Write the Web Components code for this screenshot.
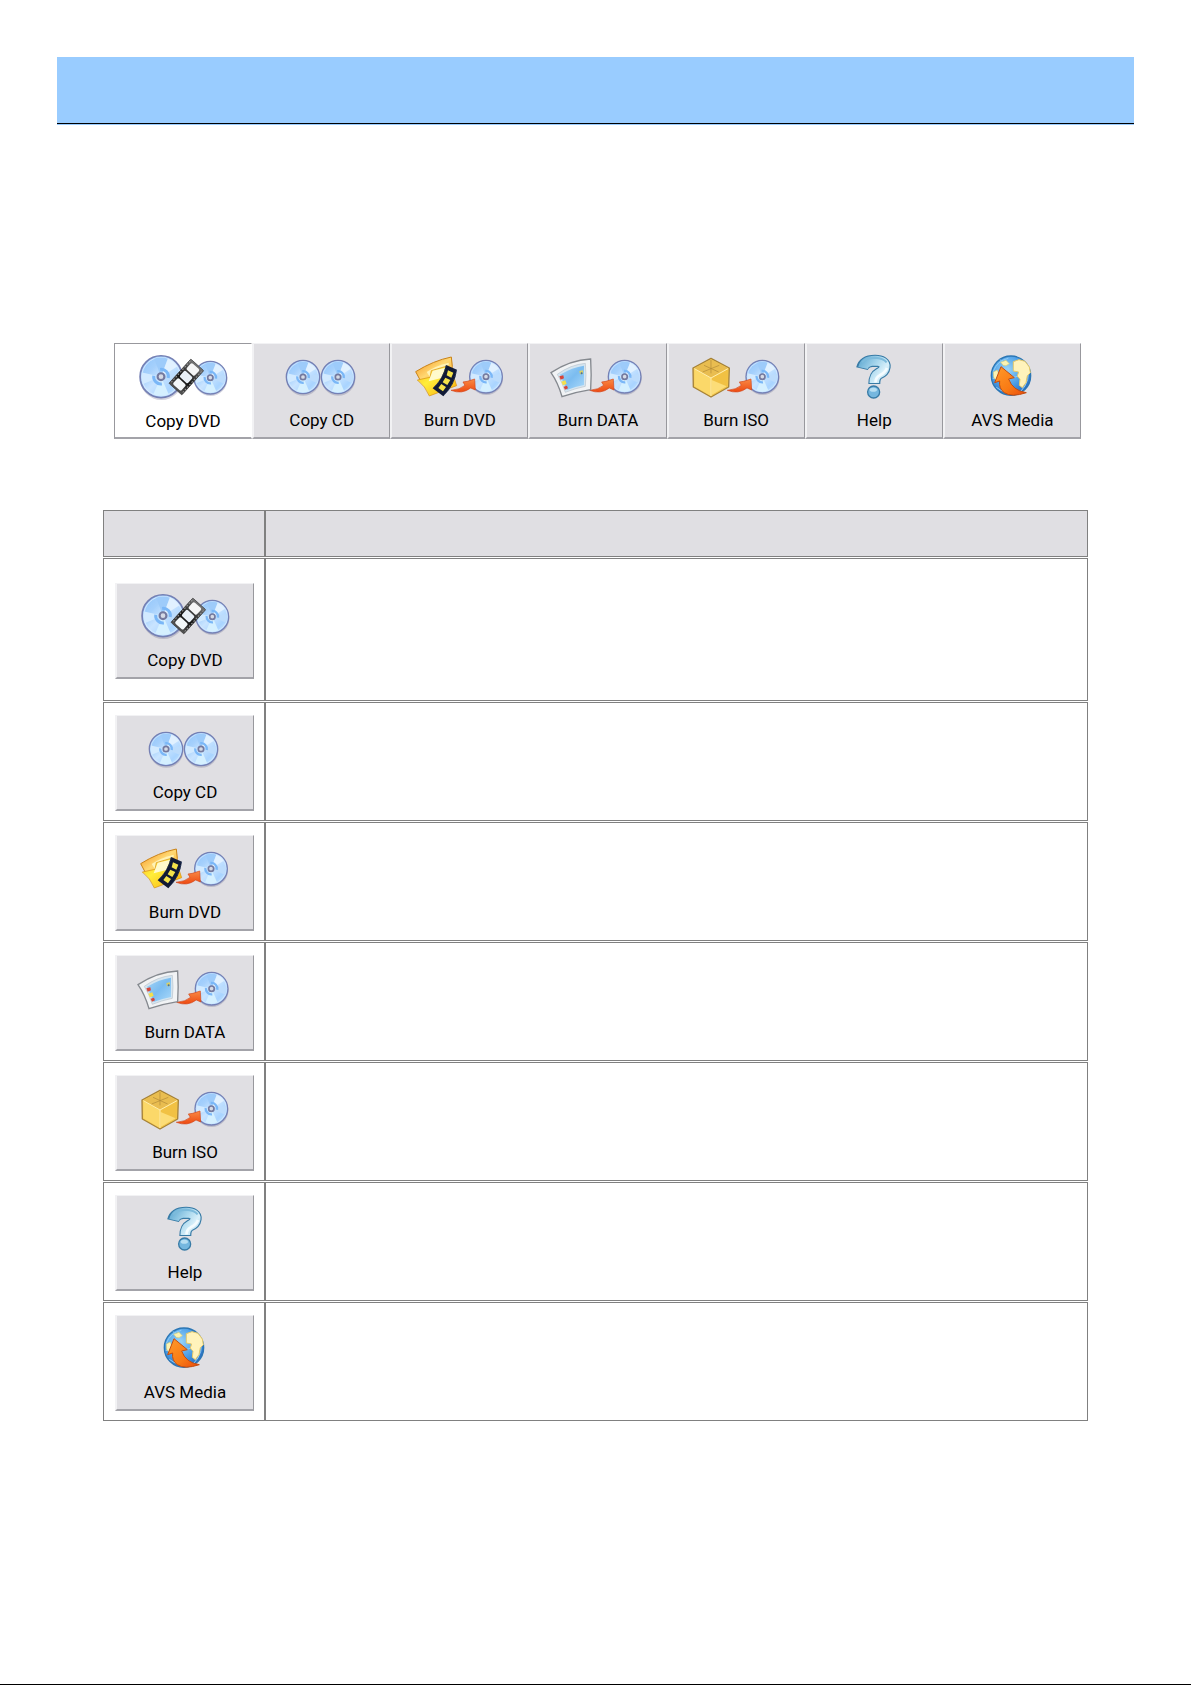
<!DOCTYPE html>
<html lang="en">
<head>
<meta charset="utf-8">
<title>Main Toolbar</title>
<style>
  body { margin: 0; background: #fff; font-family: Roboto, "Liberation Sans", sans-serif; }
</style>
</head>
<body>
<help-page>
  <tool-bar>
    <tool-button icon="copy-dvd" active>Copy DVD</tool-button>
    <tool-button icon="copy-cd">Copy CD</tool-button>
    <tool-button icon="burn-dvd">Burn DVD</tool-button>
    <tool-button icon="burn-data">Burn DATA</tool-button>
    <tool-button icon="burn-iso">Burn ISO</tool-button>
    <tool-button icon="help">Help</tool-button>
    <tool-button icon="avs-media">AVS Media</tool-button>
  </tool-bar>
  <button-table></button-table>
</help-page>

<script>
const DEFS = `
  <defs>
    <linearGradient id="disc" x1="0" y1="0" x2="1" y2="1">
      <stop offset="0" stop-color="#8fc4fb"/><stop offset=".3" stop-color="#a5d0fc"/>
      <stop offset=".5" stop-color="#c9e4ff"/><stop offset=".75" stop-color="#a9d4ff"/><stop offset="1" stop-color="#d8f0ff"/>
    </linearGradient>
    <linearGradient id="arrow" x1="0" y1="0" x2="0" y2="1">
      <stop offset="0" stop-color="#f98a45"/><stop offset="1" stop-color="#ee4a12"/>
    </linearGradient>
    <linearGradient id="gold" x1="0" y1="0" x2="1" y2="1">
      <stop offset="0" stop-color="#f58a10"/><stop offset=".5" stop-color="#ffd873"/><stop offset="1" stop-color="#fba81a"/>
    </linearGradient>
    <linearGradient id="yellow" x1="0" y1="0" x2="1" y2="1">
      <stop offset="0" stop-color="#ffb81c"/><stop offset=".4" stop-color="#ffee3a"/><stop offset="1" stop-color="#f9a90c"/>
    </linearGradient>
    <linearGradient id="photo" x1="0" y1="0" x2="1" y2="1">
      <stop offset="0" stop-color="#a5d6f8"/><stop offset=".5" stop-color="#7bbcf0"/><stop offset="1" stop-color="#a9d9fa"/>
    </linearGradient>
    <linearGradient id="film" x1="0" y1="0" x2="1" y2="0">
      <stop offset="0" stop-color="#555"/><stop offset=".4" stop-color="#111"/><stop offset="1" stop-color="#777"/>
    </linearGradient>
    <linearGradient id="mark" gradientUnits="userSpaceOnUse" x1="595" y1="85" x2="685" y2="150">
      <stop offset="0" stop-color="#5aa5cf"/><stop offset=".45" stop-color="#a5d5ec"/><stop offset=".75" stop-color="#d8f0fa"/><stop offset="1" stop-color="#a8d4ea"/>
    </linearGradient>
    <radialGradient id="globe" cx=".4" cy=".35" r=".65">
      <stop offset="0" stop-color="#9bd6fb"/><stop offset=".6" stop-color="#4d9fe6"/><stop offset="1" stop-color="#2d72c4"/>
    </radialGradient>
    <linearGradient id="fire" x1="0" y1="0" x2="1" y2="1">
      <stop offset="0" stop-color="#ff9a2a"/><stop offset=".6" stop-color="#f97a14"/><stop offset="1" stop-color="#e8480c"/>
    </linearGradient>
  </defs>`;

// a compact disc with its light sectors and hub
const disc = (x, y, r) => `
  <g transform="translate(${x} ${y}) scale(${r / 50})">
    <circle cx="1" cy="5" r="50" fill="#55557a" opacity=".25"/>
    <circle r="49" fill="url(#disc)" stroke="#7580b4" stroke-width="4"/>
    <circle r="45" fill="none" stroke="#d9ecff" stroke-width="2"/>
    <path d="M0 0 L-16 -42 A45 45 0 0 1 16 -42Z" fill="#9dcbfa"/>
    <path d="M0 0 L16 -42 A45 45 0 0 1 38 -24Z" fill="#e1f1ff"/>
    <path d="M0 0 L-44 -10 A45 45 0 0 0 -42 17Z" fill="#d2eaff"/>
    <path d="M0 0 L-18 41 A45 45 0 0 0 18 41Z" fill="#d5f0ff"/>
    <path d="M0 0 L44 -9 A45 45 0 0 1 41 18Z" fill="#bcdcfc"/>
    <path d="M-17 -2 A17 17 0 0 0 2 17 M-2 -17 A17 17 0 0 1 17 3" fill="none" stroke="#7ab7f7" stroke-width="7"/>
    <circle r="8" fill="#d5dae5" stroke="#74799e" stroke-width="5"/>
  </g>`;

const arrow = `<path d="M213 181 Q240 179 255 166 L249 156 L262 154 L284 147 L286 180 L272 174 Q246 194 213 181Z" fill="url(#arrow)" stroke="#d2471c" stroke-width="2"/>`;

const ICONS = {
  "copy-dvd": `<g transform="translate(-20 -83) scale(.3333)">
    ${disc(201, 347, 64)}${disc(349, 350, 50)}
    <g transform="translate(277 348) rotate(-48)">
      <rect x="-49" y="-26" width="98" height="52" rx="2" fill="url(#film)" stroke="#333" stroke-width="2"/>
      <path d="M-42 -23H43M-42 23H43" stroke="#999" stroke-width="3" stroke-dasharray="5 5"/>
      <rect x="-43" y="-17" width="25" height="33" rx="5" fill="#f3f7f9"/>
      <rect x="-13" y="-17" width="25" height="33" rx="5" fill="#e9f0f7"/>
      <rect x="17" y="-17" width="26" height="33" rx="5" fill="#f6f6f6"/>
    </g></g>`,
  "copy-cd": disc(50, 34, 17) + disc(85, 34, 17),
  "burn-dvd": `<g transform="translate(-11 -13) scale(.3333)">
    ${disc(318, 140, 50)}${arrow}
    <path d="M107 125 Q160 92 214 81 Q220 110 214 135 L124 157Z" fill="url(#gold)" stroke="#c98216" stroke-width="3"/>
    <path d="M140 126 Q165 108 206 98 L206 130 L150 142Z" fill="#fff3b5"/>
    <path d="M112 150 L150 142 L154 122 L205 107 Q220 130 230 167 Q195 180 148 198 Q136 168 112 150Z" fill="url(#yellow)" stroke="#d48d10" stroke-width="2"/>
    <path d="M158 122 L196 113 L184 144 L146 154Z" fill="#fff" opacity=".75"/>
    <path d="M198 105 L231 119 Q225 165 190 199 L158 175 Q188 148 198 105Z" fill="#111a35"/>
    <path d="M204 121 L220 128 L214 143 L200 136Z M196 143 L211 150 L202 165 L188 157Z M184 162 L198 171 L189 184 L175 174Z" fill="#f4e24a"/>
    <path d="M198 107 Q188 148 160 174 M229 120 Q223 165 191 196" fill="none" stroke="#3d5685" stroke-width="2" stroke-dasharray="4 5"/>
    </g>`,
  "burn-data": `<g transform="translate(-149 -13) scale(.3333)">
    <g transform="translate(416 0)">${disc(318, 140, 50)}${arrow}</g>
    <path d="M513 128 Q570 90 632 87 Q635 135 632 179 Q587 186 546 200 Q534 158 513 128Z" fill="#f1f3f5" stroke="#85898f" stroke-width="4"/>
    <path d="M532 133 Q572 104 616 100 Q620 135 616 169 Q583 176 556 187 Q547 157 532 133Z" fill="#d4e5f0" stroke="#b9c3cc" stroke-width="2"/>
    <path d="M540 134 Q577 112 612 107 L612 165 Q585 170 560 180Z" fill="url(#photo)"/>
    <path d="M538 139 L550 136 L552 145 L542 149Z M551 170 L561 167 L564 175 L555 179Z" fill="#d6453a"/>
    <path d="M544 155 L556 151 L560 162 L549 166Z" fill="#f4df4c"/>
    <path d="M598 123 L609 121 L609 132 L600 133Z" fill="#d8cf67"/><circle cx="605" cy="130" r="3" fill="#416fa5"/>
    </g>`,
  "burn-iso": `<g transform="translate(-7 -13) scale(.3333)">
    <g transform="translate(-11 0)">${disc(318, 140, 50)}${arrow}</g>
    <path d="M153 85 L208 114 L206 171 L153 201 L100 171 L99 114Z" fill="#f4c94e" stroke="#a5823a" stroke-width="4" stroke-linejoin="round"/>
    <path d="M153 88 L204 115 L153 143 L103 115Z" fill="#e9bd50"/>
    <path d="M103 117 L152 145 L152 197 L103 169Z" fill="#fbd869"/>
    <path d="M204 117 L155 145 L155 197 L203 169Z" fill="#f1c143"/>
    <path d="M155 150 L155 195 L200 169Z" fill="#ffe68a" opacity=".75"/>
    <path d="M103 116 L153 144 L204 116 M153 144V198" fill="none" stroke="#ffeeb0" stroke-width="3"/>
    <path d="M153 90V130 M128 126 L178 106 M132 106 L176 126" stroke="#b08a38" stroke-width="2"/>
    </g>`,
  "help": `<g transform="translate(-145 -13) scale(.3333)" fill="none">
    <path d="M606 116 Q612 92 645 92 Q676 93 674 111 Q672 125 656 131 Q643 138 643 162" stroke="#387ba6" stroke-width="36"/>
    <path d="M609 114 Q614 92 645 92 Q676 93 674 111 Q672 125 656 131 Q643 138 643 159" stroke="url(#mark)" stroke-width="29"/>
    <path d="M647 157 Q646 143 659 136 Q676 128 681 114" stroke="#f4fcff" stroke-width="8"/>
    <path d="M606 97 Q616 84 645 83 Q670 84 680 97" stroke="#7dbbdc" stroke-width="6"/>
    <circle cx="641" cy="186" r="18" fill="#75b7df" stroke="#387ba6" stroke-width="4"/>
    <ellipse cx="640" cy="179" rx="11" ry="6" fill="#b7def2"/>
    </g>`,
  "avs-media": `<g transform="translate(-43 -13) scale(.3333)">
    <circle cx="333" cy="137" r="59" fill="url(#globe)" stroke="#2b76b4" stroke-width="4"/>
    <path d="M280 124 Q292 92 325 85 M289 172 Q315 192 345 190 M300 88 Q340 120 326 192 M278 145 Q335 152 390 125 M381 105 Q396 150 360 187" fill="none" stroke="#8fcdf5" stroke-width="3"/>
    <path d="M340 95 L357 89 L375 94 L388 111 L391 128 L382 137 L378 158 L367 173 L358 166 L360 148 L352 138 L356 126 L340 123Z" fill="#fff3bb" stroke="#e7c968" stroke-width="3"/>
    <path d="M302 97 L318 91 L328 101 L318 107 L310 106Z M280 126 L292 120 L297 134 L290 153 L281 142Z" fill="#fbf3b4" stroke="#d8cf7a" stroke-width="2"/>
    <path d="M303 110 L343 143 L326 147 Q338 182 379 188 Q335 203 313 188 Q296 176 299 153 L284 158Z" fill="url(#fire)" stroke="#c34b0e" stroke-width="3" stroke-linejoin="round"/>
    </g>`,
};

class ToolButton extends HTMLElement {
  constructor() {
    super();
    this.attachShadow({ mode: "open" });
    this.render();
  }

  render() {
    this.shadowRoot.innerHTML = `
      <style>
        :host { display: block; }
        button {
          display: flex; flex-direction: column; align-items: center;
          box-sizing: border-box; width: 100%; height: 96px; margin: 0; padding: 0;
          border: 1px solid #f2f2f4; border-left-width: 2px; border-right-color: #98989d;
          border-bottom: 2px solid #a3a3a9;
          background: #e0dfe3; color: #000; font: inherit; font-size: 17px; line-height: 26px;
        }
        svg { display: block; width: 138px; height: 64px; margin: -1px -2px 0; flex: none; }
        :host([active]) button {
          background: #fff; border-color: #98989d #fff #a3a3a9 #98989d;
          border-left-width: 1px; padding-top: 1px;
        }
      </style>
      <button type="button">
        <svg viewBox="0 0 138 64" aria-hidden="true">${DEFS}${ICONS[this.getAttribute("icon")] || ""}</svg>
        <span><slot></slot></span>
      </button>
    `;
  }
}
customElements.define("tool-button", ToolButton);

class ToolBar extends HTMLElement {
  constructor() {
    super();
    this.attachShadow({ mode: "open" });
    this.shadowRoot.innerHTML = `
      <style>
        :host { display: flex; margin: 0 7px 0 11px; }
        ::slotted(*) { flex: 1; min-width: 0; }
      </style>
      <slot></slot>
    `;
  }
}
customElements.define("tool-bar", ToolBar);

class ButtonTable extends HTMLElement {
  constructor() {
    super();
    this.attachShadow({ mode: "open" });
    this.render();
  }

  render() {
    const rows = [
      ["copy-dvd", "Copy DVD"],
      ["copy-cd", "Copy CD"],
      ["burn-dvd", "Burn DVD"],
      ["burn-data", "Burn DATA"],
      ["burn-iso", "Burn ISO"],
      ["help", "Help"],
      ["avs-media", "AVS Media"],
    ];
    this.shadowRoot.innerHTML = `
      <style>
        :host { display: block; }
        table { width: 100%; table-layout: fixed; border-collapse: separate; border-spacing: 0 1px; }
        th, td { box-sizing: border-box; border: 1px solid #808080; }
        th { height: 47px; padding: 0; background: #e0dfe3; }
        th:first-child { width: 162px; }
        td { height: 119px; padding: 12px 10px 9px 11px; vertical-align: middle; }
        tbody tr:first-child td { height: 143px; }
      </style>
      <table>
        <thead><tr><th></th><th></th></tr></thead>
        <tbody>
          ${rows.map(([icon, label]) => `<tr><td><tool-button icon="${icon}">${label}</tool-button></td><td></td></tr>`).join("")}
        </tbody>
      </table>
    `;
  }
}
customElements.define("button-table", ButtonTable);

class HelpPage extends HTMLElement {
  constructor() {
    super();
    this.attachShadow({ mode: "open" });
    this.shadowRoot.innerHTML = `
      <style>
        :host {
          display: block; box-sizing: border-box; min-height: 100vh;
          padding: 57px; border-bottom: 1px solid #000;
        }
        header { height: 66px; background: #99ccff; border-bottom: 1px solid #000; box-shadow: 0 1px #99ccff; }
        main { display: flex; flex-direction: column; gap: 70px; padding: 219px 46px 0; }
      </style>
      <header></header>
      <main><slot></slot></main>
    `;
  }
}
customElements.define("help-page", HelpPage);
</script>
</body>
</html>
